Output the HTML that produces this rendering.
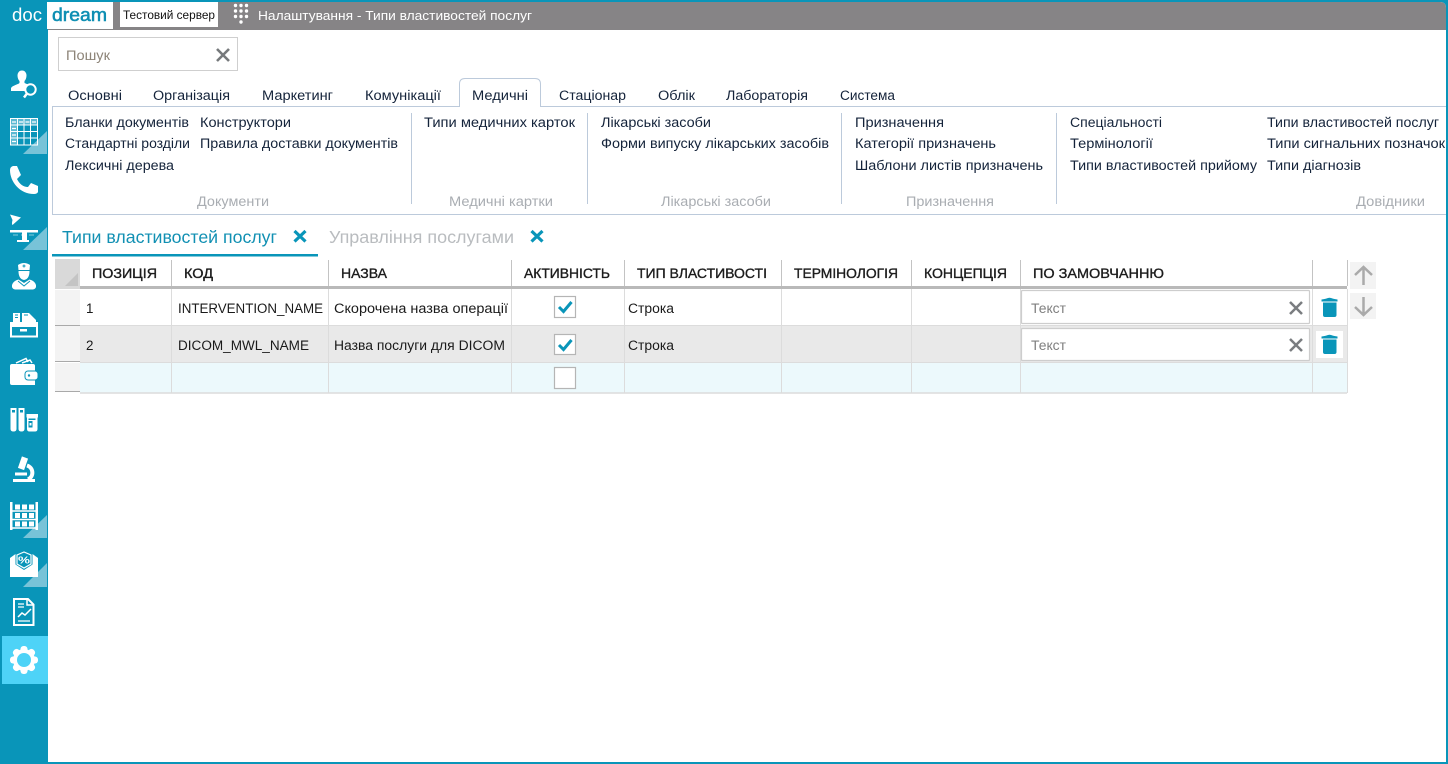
<!DOCTYPE html>
<html lang="uk"><head><meta charset="utf-8"><title>Типи властивостей послуг</title>
<style>
html,body{margin:0;padding:0;background:#fff;width:1448px;height:764px;overflow:hidden}
svg{display:block}
text{font-family:"Liberation Sans","DejaVu Sans",sans-serif;font-size:13.4px;fill:#1a1a1a}
.t{fill:#14233a}
.g{fill:#a9adb2}
.h{fill:#1c1c1c;stroke:#1c1c1c;stroke-width:.35px}
.w{fill:#fff}
.s{stroke:#fff;fill:none}
</style></head><body>
<svg width="1448" height="764" viewBox="0 0 1448 764" xmlns="http://www.w3.org/2000/svg">
<rect width="1448" height="764" fill="#0995b9"/>
<path d="M48 2H1440Q1446 2 1446 8V762H48Z" fill="#fff"/>
<path d="M48 2H1440Q1446 2 1446 8V30H48Z" fill="#868486"/>
<rect x="47" y="2" width="66" height="27" fill="#fff"/>
<text x="12" y="21" textLength="30" lengthAdjust="spacingAndGlyphs" class="w" style="font-size:18px">doc</text>
<text x="52" y="21" textLength="55" lengthAdjust="spacingAndGlyphs" style="font-size:18px;fill:#0e8fb3;stroke:#0e8fb3;stroke-width:.55px">dream</text>
<rect x="120" y="2" width="98" height="25" fill="#fff"/>
<text x="123" y="19" textLength="92" lengthAdjust="spacingAndGlyphs" style="font-size:12px;fill:#111">Тестовий сервер</text>
<g fill="#fff"><circle cx="235.500" cy="5.500" r="1.700"/><circle cx="241" cy="5.500" r="1.700"/><circle cx="246.500" cy="5.500" r="1.700"/><circle cx="235.500" cy="11" r="1.700"/><circle cx="241" cy="11" r="1.700"/><circle cx="246.500" cy="11" r="1.700"/><circle cx="235.500" cy="16.500" r="1.700"/><circle cx="241" cy="16.500" r="1.700"/><circle cx="246.500" cy="16.500" r="1.700"/><circle cx="241" cy="22" r="1.700"/></g>
<text x="258" y="20" textLength="274" lengthAdjust="spacingAndGlyphs" class="w" style="font-size:13px">Налаштування - Типи властивостей послуг</text>

<!-- search -->
<rect x="58.500" y="37.500" width="179" height="33" fill="#fff" stroke="#cfcfcf"/>
<text x="66" y="60" textLength="44" lengthAdjust="spacingAndGlyphs" style="fill:#8d8478">Пошук</text>
<path d="M217 49L229 61M229 49L217 61" stroke="#76797c" stroke-width="2.600" fill="none"/>

<!-- ribbon -->
<path d="M52.500 214.500V106.500H459.500V84Q459.500 78.500 465 78.500H535Q540.500 78.500 540.500 84V106.500H1446" fill="#fff" stroke="#bccadb"/>
<path d="M52 214.500H1446" stroke="#bccadb"/>
<g>
<text x="68" y="100" textLength="54" lengthAdjust="spacingAndGlyphs" class="t">Основні</text>
<text x="153" y="100" textLength="77" lengthAdjust="spacingAndGlyphs" class="t">Організація</text>
<text x="262" y="100" textLength="71" lengthAdjust="spacingAndGlyphs" class="t">Маркетинг</text>
<text x="365" y="100" textLength="76" lengthAdjust="spacingAndGlyphs" class="t">Комунікації</text>
<text x="472" y="100" textLength="56" lengthAdjust="spacingAndGlyphs" class="t">Медичні</text>
<text x="559" y="100" textLength="67" lengthAdjust="spacingAndGlyphs" class="t">Стаціонар</text>
<text x="658" y="100" textLength="37" lengthAdjust="spacingAndGlyphs" class="t">Облік</text>
<text x="726" y="100" textLength="82" lengthAdjust="spacingAndGlyphs" class="t">Лабораторія</text>
<text x="840" y="100" textLength="55" lengthAdjust="spacingAndGlyphs" class="t">Система</text>
</g>
<text x="65" y="127" textLength="124" lengthAdjust="spacingAndGlyphs" class="t">Бланки документів</text>
<text x="200" y="127" textLength="91" lengthAdjust="spacingAndGlyphs" class="t">Конструктори</text>
<text x="65" y="148" textLength="125" lengthAdjust="spacingAndGlyphs" class="t">Стандартні розділи</text>
<text x="200" y="148" textLength="198" lengthAdjust="spacingAndGlyphs" class="t">Правила доставки документів</text>
<text x="65" y="170" textLength="109" lengthAdjust="spacingAndGlyphs" class="t">Лексичні дерева</text>
<text x="424" y="127" textLength="151" lengthAdjust="spacingAndGlyphs" class="t">Типи медичних карток</text>
<text x="601" y="127" textLength="110" lengthAdjust="spacingAndGlyphs" class="t">Лікарські засоби</text>
<text x="601" y="148" textLength="228" lengthAdjust="spacingAndGlyphs" class="t">Форми випуску лікарських засобів</text>
<text x="855" y="127" textLength="89" lengthAdjust="spacingAndGlyphs" class="t">Призначення</text>
<text x="855" y="148" textLength="141" lengthAdjust="spacingAndGlyphs" class="t">Категорії призначень</text>
<text x="855" y="170" textLength="188" lengthAdjust="spacingAndGlyphs" class="t">Шаблони листів призначень</text>
<text x="1070" y="127" textLength="92" lengthAdjust="spacingAndGlyphs" class="t">Спеціальності</text>
<text x="1070" y="148" textLength="83" lengthAdjust="spacingAndGlyphs" class="t">Термінології</text>
<text x="1070" y="170" textLength="187" lengthAdjust="spacingAndGlyphs" class="t">Типи властивостей прийому</text>
<text x="1267" y="127" textLength="172" lengthAdjust="spacingAndGlyphs" class="t">Типи властивостей послуг</text>
<text x="1267" y="148" textLength="178" lengthAdjust="spacingAndGlyphs" class="t">Типи сигнальних позначок</text>
<text x="1267" y="170" textLength="94" lengthAdjust="spacingAndGlyphs" class="t">Типи діагнозів</text>
<text x="197" y="206" textLength="72" lengthAdjust="spacingAndGlyphs" class="g">Документи</text>
<text x="449" y="206" textLength="104" lengthAdjust="spacingAndGlyphs" class="g">Медичні картки</text>
<text x="661" y="206" textLength="110" lengthAdjust="spacingAndGlyphs" class="g">Лікарські засоби</text>
<text x="906" y="206" textLength="88" lengthAdjust="spacingAndGlyphs" class="g">Призначення</text>
<text x="1356" y="206" textLength="69" lengthAdjust="spacingAndGlyphs" class="g">Довідники</text>
<path d="M411.500 113V204M587.500 113V204M841.500 113V204M1056.500 113V204" stroke="#bccadb"/>

<!-- document tabs -->
<text x="62" y="243" textLength="215" lengthAdjust="spacingAndGlyphs" style="font-size:17.300px;fill:#1190b3">Типи властивостей послуг</text>
<path d="M294.500 231L305.500 241.500M305.500 231L294.500 241.500" stroke="#0995b9" stroke-width="3.200" fill="none"/>
<rect x="52" y="254" width="266" height="2.500" fill="#0995b9"/>
<text x="329" y="243" textLength="185" lengthAdjust="spacingAndGlyphs" style="font-size:17.300px;fill:#b9bcbf">Управління послугами</text>
<path d="M531.500 231L542.500 241.500M542.500 231L531.500 241.500" stroke="#0995b9" stroke-width="3.200" fill="none"/>

<!-- grid -->
<rect x="55" y="259" width="25" height="30" fill="#d9d9d9"/>
<path d="M65 286L78 286L78 273Z" fill="#c4c4c4"/>
<rect x="55" y="290" width="25" height="35" fill="#f3f3f3"/>
<rect x="55" y="326" width="25" height="36" fill="#f3f3f3"/>
<rect x="55" y="363" width="25" height="29" fill="#f3f3f3"/>
<path d="M55 325.500H80M55 361.500H80M55 391.500H80" stroke="#a9a9a9"/>
<rect x="80" y="326" width="1267" height="37" fill="#e9e9e9"/>
<rect x="80" y="363" width="1267" height="30" fill="#ecf9fc"/>
<rect x="80" y="286" width="1267" height="3" fill="#b9b9b9"/>
<path d="M80 325.500H1347M80 362.500H1347" stroke="#dcdcdc"/>
<path d="M80 393H1347" stroke="#dcdcdc" stroke-width="1.500"/>
<path d="M171.500 260V286M328.500 260V286M511.500 260V286M624.500 260V286M781.500 260V286M911.500 260V286M1020.500 260V286M1312.500 260V286M1347.500 260V286" stroke="#c3c3c3"/>
<path d="M171.500 289V393M328.500 289V393M511.500 289V393M624.500 289V393M781.500 289V393M911.500 289V393M1020.500 289V393M1312.500 289V393M1347.500 289V393" stroke="#dcdcdc"/>

<text x="92" y="278" textLength="65" lengthAdjust="spacingAndGlyphs" class="h">ПОЗИЦІЯ</text>
<text x="184" y="278" textLength="29" lengthAdjust="spacingAndGlyphs" class="h">КОД</text>
<text x="341" y="278" textLength="46" lengthAdjust="spacingAndGlyphs" class="h">НАЗВА</text>
<text x="524" y="278" textLength="86" lengthAdjust="spacingAndGlyphs" class="h">АКТИВНІСТЬ</text>
<text x="637" y="278" textLength="130" lengthAdjust="spacingAndGlyphs" class="h">ТИП ВЛАСТИВОСТІ</text>
<text x="794" y="278" textLength="104" lengthAdjust="spacingAndGlyphs" class="h">ТЕРМІНОЛОГІЯ</text>
<text x="924" y="278" textLength="83" lengthAdjust="spacingAndGlyphs" class="h">КОНЦЕПЦІЯ</text>
<text x="1033" y="278" textLength="131" lengthAdjust="spacingAndGlyphs" class="h">ПО ЗАМОВЧАННЮ</text>

<text x="86" y="313">1</text>
<text x="178" y="313" textLength="145" lengthAdjust="spacingAndGlyphs">INTERVENTION_NAME</text>
<text x="334" y="313" textLength="174" lengthAdjust="spacingAndGlyphs">Скорочена назва операції</text>
<text x="628" y="313" textLength="46" lengthAdjust="spacingAndGlyphs">Строка</text>
<text x="86" y="350">2</text>
<text x="178" y="350" textLength="131" lengthAdjust="spacingAndGlyphs">DICOM_MWL_NAME</text>
<text x="334" y="350" textLength="171" lengthAdjust="spacingAndGlyphs">Назва послуги для DICOM</text>
<text x="628" y="350" textLength="46" lengthAdjust="spacingAndGlyphs">Строка</text>

<rect x="554.500" y="296.500" width="21" height="21" fill="#fff" stroke="#b5b5b5" stroke-width="1.200"/>
<path d="M559 307L563.500 311.500L571.500 302" stroke="#0995b9" stroke-width="3" fill="none"/>
<rect x="554.500" y="334.500" width="21" height="20" fill="#fff" stroke="#b5b5b5" stroke-width="1.200"/>
<path d="M559 345L563.500 349.500L571.500 340" stroke="#0995b9" stroke-width="3" fill="none"/>
<rect x="554.500" y="367.500" width="21" height="21" fill="#fff" stroke="#b5b5b5" stroke-width="1.200"/>

<rect x="1021.500" y="290.500" width="288" height="33" rx="1" fill="#fff" stroke="#cdcdcd" stroke-width="1.200"/>
<text x="1031" y="313" textLength="35" lengthAdjust="spacingAndGlyphs" style="fill:#7f7f7f">Текст</text>
<path d="M1290 302L1302 314M1302 302L1290 314" stroke="#7a7d80" stroke-width="2.500" fill="none"/>
<rect x="1021.500" y="328.500" width="288" height="32" rx="1" fill="#fff" stroke="#cdcdcd" stroke-width="1.200"/>
<text x="1031" y="350" textLength="35" lengthAdjust="spacingAndGlyphs" style="fill:#7f7f7f">Текст</text>
<path d="M1290 339L1302 351M1302 339L1290 351" stroke="#7a7d80" stroke-width="2.500" fill="none"/>

<path d="M1321.500 299.500Q1325 299 1326.500 298.500Q1329.500 297 1332.500 298.500Q1334 299 1337.500 299.500V301.500H1321.500ZM1323 302.500H1336.500V315Q1336.500 317 1334.500 317H1325Q1323 317 1323 315Z" fill="#0995b9"/>
<rect x="1316" y="331" width="27" height="27" fill="#fff"/>
<path d="M1321.500 336.500Q1325 336 1326.500 335.500Q1329.500 334 1332.500 335.500Q1334 336 1337.500 336.500V338.500H1321.500ZM1323 339.500H1336.500V352Q1336.500 354 1334.500 354H1325Q1323 354 1323 352Z" fill="#0995b9"/>

<rect x="1350" y="262" width="26" height="27" fill="#f3f3f3"/>
<path d="M1363.500 285V267M1355 275L1363.500 267L1372 275" stroke="#aaa" stroke-width="2.500" fill="none"/>
<rect x="1350" y="293" width="26" height="26" fill="#f3f3f3"/>
<path d="M1363.500 297V315M1355 307L1363.500 315L1372 307" stroke="#aaa" stroke-width="2.500" fill="none"/>

<!-- sidebar -->
<g fill="#78c3d8"><path d="M23 154L47 131V154Z"/><path d="M23 250L47 227V250Z"/><path d="M23 538L47 515V538Z"/><path d="M23 587L47 563V587Z"/></g>
<rect x="2" y="636" width="46" height="48" fill="#4ed3f7"/>
<!-- user search -->
<path d="M22 70.500C25 70.500 26.500 73 26.500 75.500C26.500 78 25.500 80 24.500 81V83L28 84.500C26 86 24.500 88.500 24.500 91H11V88.500C11 86 18 84.500 19.500 83V81C18.500 80 17.500 78 17.500 75.500C17.500 73 19 70.500 22 70.500Z" fill="#fff"/>
<circle cx="30.500" cy="89.500" r="5.200" class="s" stroke-width="2"/>
<path d="M27 93.500L24 97.500" class="s" stroke-width="2.500"/>
<!-- table -->
<rect x="11" y="119" width="26" height="6" fill="#5cb9d2"/>
<rect x="11" y="119" width="6.500" height="26" fill="#5cb9d2"/>
<path d="M10.500 118.500H37.500V145H10.500ZM10.500 125H37.500M10.500 131.500H37.500M10.500 138H37.500M17.500 118.500V145M24 118.500V145M30.500 118.500V145" class="s"/>
<path d="M12 122H16M19 122H23M25.500 122H29.500M32 122H36M12 128.500H16M12 135H16M12 141.500H16" class="s" stroke-width="1.200"/>
<!-- phone -->
<path d="M10 170Q10 167 13 166L17 166L21 175L17 179Q21 187 28 187L31 183L38 186L38 192Q37 194 34 194C20 194 10 182 10 170Z" fill="#fff"/>
<!-- surgical -->
<path d="M10 214.500L21 217.500L12.500 225Q11.500 224 12.500 220Z" fill="#fff"/>
<path d="M10 230H38V232.500H10ZM22 232.500H27V240H22ZM17 240H29V242H17Z" fill="#fff"/>
<path d="M13 235H35" stroke="#fff" stroke-width="1" stroke-dasharray="5 3" opacity=".5"/>
<!-- doctor -->
<path d="M18 265Q24 261 30 265L29.500 270H18.500Z" fill="#fff"/>
<path d="M18.500 271H29.500Q29.500 279 24 280Q18.500 279 18.500 271Z" fill="#fff"/>
<path d="M18.500 279.500L24 283L29.500 279.500Q35 281 36 285Q36.500 289 33 289.500H15Q11.500 289 12 285Q13 281 18.500 279.500Z" fill="#fff"/>
<path d="M18 281L24 286L30 281" stroke="#0995b9" stroke-width="1" fill="none"/>
<path d="M22.500 266H25.500M24 264.500V267.500" stroke="#0995b9"/>
<!-- archive -->
<path d="M13 313H20V322H13ZM22 313H29L36 320V322H22Z" fill="#fff"/>
<path d="M15 315H18M15 317.500H18M24 315H28" stroke="#0995b9" stroke-width="1"/>
<rect x="10" y="322" width="28" height="3.500" fill="#fff"/>
<rect x="11" y="326" width="26" height="10.500" fill="none" stroke="#fff" stroke-width="2"/>
<rect x="20" y="329" width="7" height="2.500" fill="#fff"/>
<!-- wallet -->
<path d="M16 363L26 358.500L28 362M22 363L30 360L32 363" class="s" stroke-width="1.500"/>
<path d="M12 364H33Q35 364 35 366V385H12Q10 385 10 383V366Q10 364 12 364Z" fill="#fff"/>
<rect x="25" y="371" width="13" height="9" rx="3" fill="#fff" stroke="#0995b9" stroke-width="1"/>
<circle cx="29" cy="375.500" r="1.200" fill="#0995b9"/>
<!-- tubes -->
<path d="M10.500 408H16.500V429Q16.500 431.500 13.500 431.500Q10.500 431.500 10.500 429ZM18.500 408H24.500V429Q24.500 431.500 21.500 431.500Q18.500 431.500 18.500 429Z" fill="#fff"/>
<rect x="12" y="410" width="3" height="2.500" fill="#0995b9"/><rect x="20" y="410" width="3" height="2.500" fill="#0995b9"/>
<path d="M26.500 414H38V417.500H37.500V429Q37.500 431.500 35 431.500H29.500Q27 431.500 27 429V417.500H26.500Z" fill="#fff"/>
<rect x="28.500" y="418.500" width="7" height="1.500" fill="#0995b9"/>
<rect x="28.500" y="421" width="4" height="6.500" fill="#0995b9"/><rect x="29.500" y="423" width="2" height="2.500" fill="#fff"/>
<!-- microscope -->
<path d="M25 457.500L21 469" stroke="#fff" stroke-width="6.500" fill="none"/>
<path d="M27 465.500A7.500 7.500 0 0 1 28 479.500" stroke="#fff" stroke-width="4" fill="none"/>
<rect x="15" y="472.500" width="12" height="3" fill="#fff"/>
<rect x="13" y="479" width="22" height="3" fill="#fff"/>
<!-- shelf -->
<path d="M11.250 502V530M36.750 502V530" class="s" stroke-width="2.500"/>
<path d="M10 511H38M10 519.500H38M10 528H38" class="s" stroke-width="1.500"/>
<g fill="#fff"><rect x="15" y="504.500" width="5" height="5"/><rect x="22" y="504.500" width="5" height="5"/><rect x="29" y="504.500" width="5" height="5"/><rect x="15" y="513" width="5" height="5"/><rect x="22" y="513" width="5" height="5"/><rect x="29" y="513" width="5" height="5"/><rect x="15" y="521.500" width="5" height="5"/><rect x="22" y="521.500" width="5" height="5"/><rect x="29" y="521.500" width="5" height="5"/></g>
<!-- envelope -->
<path d="M10 558L15.500 554V564.500L24 570L32.500 564.500V554L38 558V577H10Z" fill="#fff"/>
<path d="M17 555L24 552L31 555V564L24 568L17 564Z" class="s" stroke-width="1.200"/>
<text x="18" y="563.500" class="w" style="font-size:10px;font-weight:bold" textLength="12" lengthAdjust="spacingAndGlyphs">%</text>
<!-- report -->
<path d="M14 599H28L33.500 604.500V625H14Z" class="s" stroke-width="2"/>
<path d="M27 599V605H33" class="s" stroke-width="1.500"/>
<path d="M18 604H24M18 607H24M18 621H30" class="s" stroke-width="1.200"/>
<path d="M18 617L22 613L25 615L31 609" class="s" stroke-width="1.500"/>
<!-- gear -->
<g fill="#fff">
<circle cx="24" cy="660" r="11"/>
<rect x="20.500" y="646" width="7" height="28" rx="3"/>
<rect x="20.500" y="646" width="7" height="28" rx="3" transform="rotate(45 24 660)"/>
<rect x="20.500" y="646" width="7" height="28" rx="3" transform="rotate(90 24 660)"/>
<rect x="20.500" y="646" width="7" height="28" rx="3" transform="rotate(135 24 660)"/>
</g>
<circle cx="24" cy="660" r="7" fill="#4ed3f7"/>
</svg>
</body></html>
